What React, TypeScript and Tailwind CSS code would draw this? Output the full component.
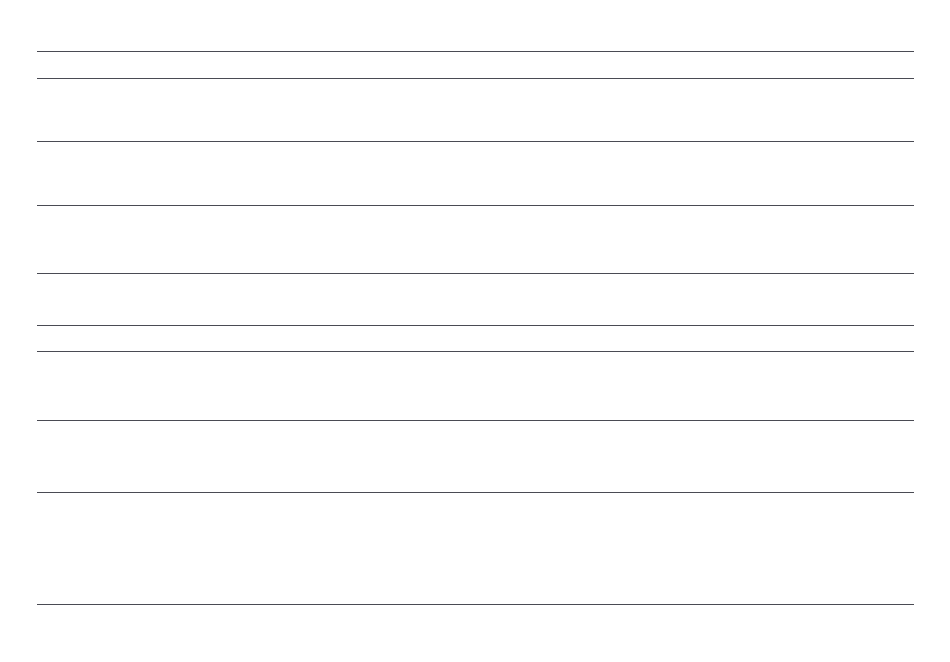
const rows = [27, 63, 64, 68, 52, 26, 69, 72];

export default function App() {
  return (
    <div className="min-h-screen bg-white pt-[51px]">
      <div className="w-[877px] mx-auto flex flex-col">
        {rows.map((h, i) => (
          <div key={i} className="border-t border-[#4a4b53]" style={{ height: h }} />
        ))}
        <div className="h-[113px] border-t border-b border-[#4a4b53]" />
      </div>
    </div>
  );
}
